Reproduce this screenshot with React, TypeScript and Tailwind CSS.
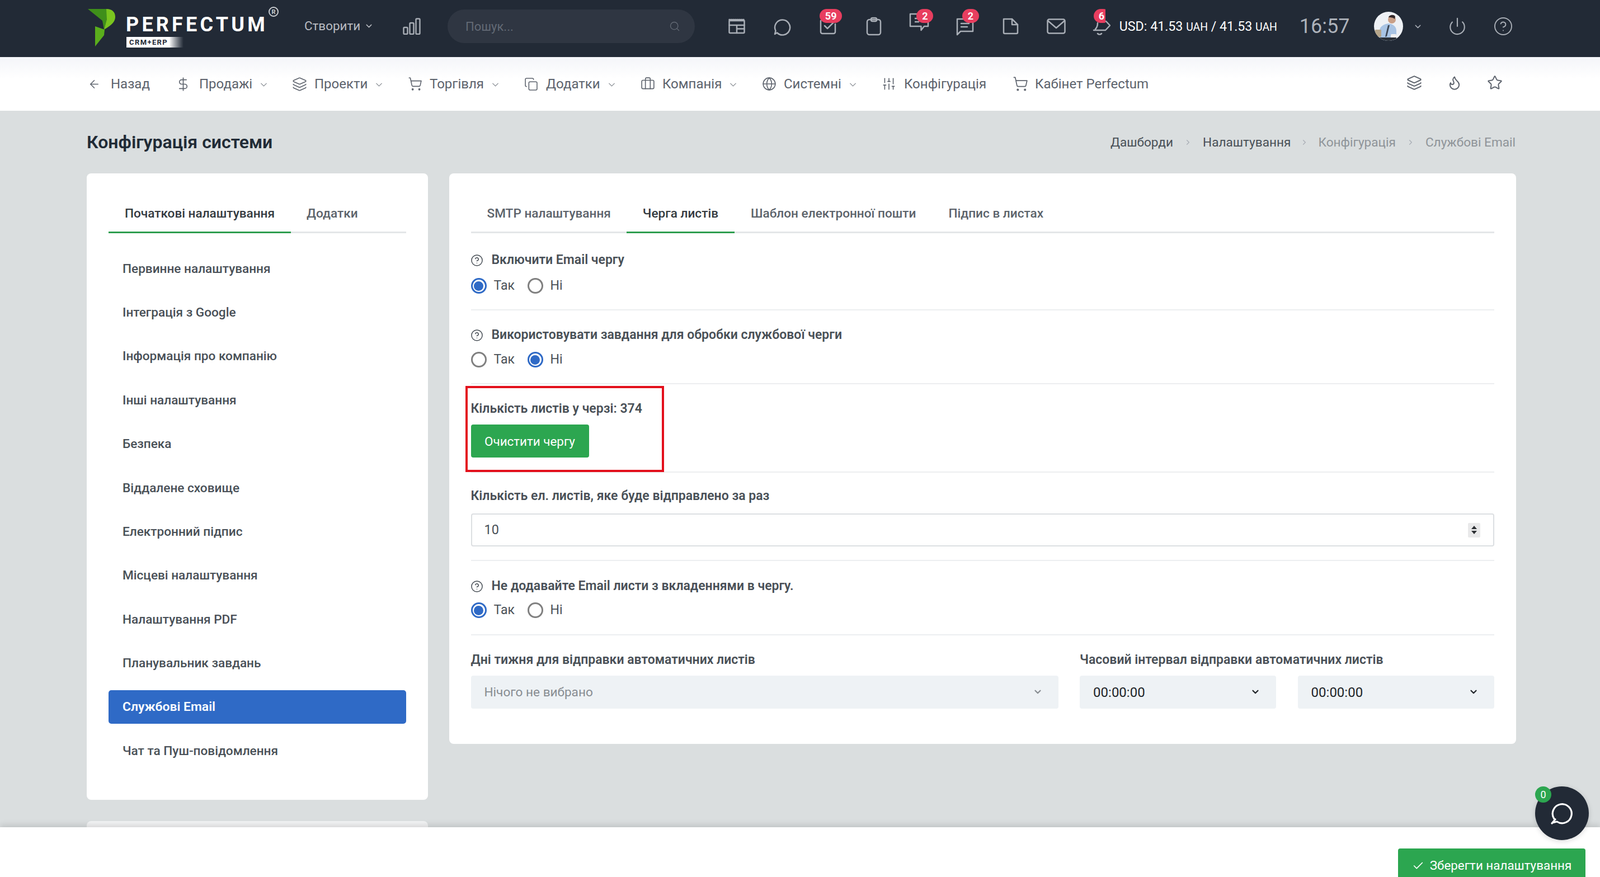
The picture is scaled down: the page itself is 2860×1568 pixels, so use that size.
import React from "react";
import { ArrowLeft, DollarSign, Layers, ShoppingCart, Copy, Briefcase, Globe, SlidersVertical, ChevronDown, ChevronRight, Flame, Star, Check, CircleHelp, Power, Search } from "lucide-react";

function Badge({ text, className }: { text: string; className: string }) {
  return (
    <span className={`absolute flex h-[25px] items-center justify-center rounded-full bg-[#e83e5f] text-[18px] font-bold text-white ${className}`}>{text}</span>
  );
}

function HeaderIcon({ children }: { children: React.ReactNode }) {
  return (
    <svg viewBox="0 0 36 36" width="36" height="36" fill="none" stroke="#a9aeb6" strokeWidth="2.5" strokeLinecap="round" strokeLinejoin="round">
      {children}
    </svg>
  );
}

function Radio({ checked, label }: { checked: boolean; label: string }) {
  return (
    <span className="flex items-center">
      {checked ? (
        <span className="flex h-[28px] w-[28px] items-center justify-center rounded-full border-[3px] border-[#2f6ac6]">
          <span className="h-[17px] w-[17px] rounded-full bg-[#2f6ac6]" />
        </span>
      ) : (
        <span className="h-[28px] w-[28px] rounded-full border-[3px] border-[#808080]" />
      )}
      <span className="ml-[13px] text-[23px] leading-[28px] text-[#495057]">{label}</span>
    </span>
  );
}

function RadioRow({ first, className }: { first: boolean; className: string }) {
  return (
    <div className={`flex ${className}`}>
      <div className="w-[101px]">
        <Radio checked={first} label="Так" />
      </div>
      <Radio checked={!first} label="Ні" />
    </div>
  );
}

function HelpLabel({ children }: { children: React.ReactNode }) {
  return (
    <div className="flex h-[30px] items-center">
      <CircleHelp size={23} strokeWidth={1.6} className="ml-[-1px] text-[#495057]" />
      <span className="ml-[15px] pt-[1px] text-[23px] font-semibold text-[#495057]">{children}</span>
    </div>
  );
}

function Label({ children }: { children: React.ReactNode }) {
  return <div className="flex h-[30px] items-center pt-[1px] text-[23px] font-semibold text-[#495057]">{children}</div>;
}

function Select({ text, muted, className }: { text: string; muted?: boolean; className: string }) {
  return (
    <div className={`flex h-[59px] items-center justify-between rounded-[4px] bg-[#eef2f5] pl-[24px] pr-[28px] ${className}`}>
      <span className={muted ? "text-[22.6px] text-[#888d92]" : "text-[24px] text-[#212529]"}>{text}</span>
      <ChevronDown size={18} strokeWidth={3} className={muted ? "mb-[2px] text-[#888d92]" : "mb-[2px] text-[#212529]"} />
    </div>
  );
}

const sideItems = [
  "Первинне налаштування",
  "Інтеграція з Google",
  "Інформація про компанію",
  "Інші налаштування",
  "Безпека",
  "Віддалене сховище",
  "Електронний підпис",
  "Місцеві налаштування",
  "Налаштування PDF",
  "Планувальник завдань",
  "Службові Email",
  "Чат та Пуш-повідомлення",
];

function NavItem({ icon, label, width, iconW, caret }: { icon: React.ReactNode; label: string; width: string; iconW: string; caret?: boolean }) {
  return (
    <div className={`flex items-center ${width}`}>
      <span className={`flex items-center ${iconW}`}>{icon}</span>
      <span className="text-[24px] text-[#5d636d]">{label}</span>
      {caret && <ChevronDown size={19} strokeWidth={1.4} className="ml-[11px] mt-[2px] text-[#7f848b]" />}
    </div>
  );
}

export default function App() {
  return (
    <div className="relative h-[1568px] w-[2860px] overflow-hidden bg-[#dadedf] font-[Roboto,sans-serif]">
      {/* top bar */}
      <header className="flex h-[102px] items-center bg-[#222a36] pb-[8px] pl-[155px]">
        <div className="relative h-[102px] w-[389px] shrink-0">
          <svg className="absolute left-[2px] top-[20px]" width="49" height="67" viewBox="0 0 49 67">
            <path d="M0 0H33L36 10L29 37L26 21Z" fill="#3f8f1a" />
            <path d="M33 0C45 0 49 7 49 14C49 22 44 28 29 37L34 18Z" fill="#7ac51f" />
            <path d="M13 31L30 37L29 47L13 67Z" fill="#5aae1c" />
          </svg>
          <span className="absolute left-[70px] top-[28px] font-['Inter',sans-serif] text-[36px] font-bold leading-[40px] tracking-[5.2px] text-white">PERFECTUM</span>
          <span className="absolute left-[71px] top-[70px] flex h-[19px] w-[102px] items-center bg-gradient-to-r from-white from-75% to-[#222a36] pl-[5px] font-['Inter',sans-serif] text-[13px] font-bold tracking-[1.4px] text-[#222a36]">CRM+ERP</span>
          <span className="absolute left-[325px] top-[16px] flex h-[18px] w-[18px] items-center justify-center rounded-full border-2 border-[#c9ccd0] text-[11px] font-bold leading-none text-[#c9ccd0]">R</span>
        </div>
        <div className="flex w-[176px] shrink-0 items-center text-[#b9bcc2]">
          <span className="text-[22.4px]">Створити</span>
          <ChevronDown size={17} strokeWidth={2} className="ml-[7px]" />
        </div>
        <div className="w-[80px] shrink-0">
          <svg width="32" height="30" viewBox="0 0 32 30" fill="none" stroke="#a9aeb6" strokeWidth="2.4">
            <rect x="1.5" y="17" width="7" height="12" rx="1.5" />
            <rect x="12.5" y="9" width="7" height="20" rx="1.5" />
            <rect x="23.5" y="1.5" width="7" height="27.5" rx="1.5" />
          </svg>
        </div>
        <div className="flex h-[60px] w-[442px] shrink-0 items-center justify-between rounded-[30px] bg-[#2f3642] pl-[32px] pr-[26px]">
          <span className="text-[22px] text-[#636a75]">Пошук...</span>
          <Search size={20} strokeWidth={1.6} className="text-[#636a75]" />
        </div>
        <div className="ml-[34px] flex shrink-0">
          <div className="flex h-[36px] w-[81.6px] justify-center">
            <HeaderIcon>
              <path d="M4.5 8h27v20.5a1.5 1.5 0 0 1-1.500 1.500H6a1.500 1.500 0 0 1-1.500-1.500Z" />
              <path d="M4.500 6h27" strokeDasharray="1.500 2" />
              <path d="M4.500 16h27M18 22.500h13.500M18 16v14" />
            </HeaderIcon>
          </div>
          <div className="flex h-[36px] w-[81.6px] justify-center">
            <HeaderIcon>
              <path d="M9 29.500 5 32l1.500-6A13.500 13.500 0 1 1 9 29.500Z" />
            </HeaderIcon>
          </div>
          <div className="relative flex h-[36px] w-[81.6px] justify-center">
            <HeaderIcon>
              <path d="M31 14v14a3 3 0 0 1-3 3H8a3 3 0 0 1-3-3V8" />
              <path d="M12 17l5 5 12-12" />
            </HeaderIcon>
            <Badge text="59" className="left-[26px] top-[-13px] w-[40px]" />
          </div>
          <div className="flex h-[36px] w-[81.6px] justify-center">
            <HeaderIcon>
              <rect x="6" y="6" width="24" height="27" rx="4" />
              <rect x="13" y="3" width="10" height="6" rx="2.500" />
            </HeaderIcon>
          </div>
          <div className="relative flex h-[36px] w-[81.6px] justify-center">
            <svg className="mt-[-7px]" viewBox="0 0 36 36" width="36" height="36" fill="none" stroke="#a9aeb6" strokeWidth="2.5" strokeLinejoin="round">
              <path d="M2 3h32v22H27l-5.500 7v-7H2Z" />
              <path d="M10 11h10M10 17h8" />
            </svg>
            <Badge text="2" className="left-[36px] top-[-13px] w-[30px]" />
          </div>
          <div className="relative flex h-[36px] w-[81.6px] justify-center">
            <HeaderIcon>
              <path d="M4 5h28v22H10l-6 6Z" />
              <path d="M11 13h14M11 19h11" />
            </HeaderIcon>
            <Badge text="2" className="left-[36px] top-[-13px] w-[30px]" />
          </div>
          <div className="flex h-[36px] w-[81.6px] justify-center">
            <HeaderIcon>
              <path d="M6 5h15l10 10v14a2 2 0 0 1-2 2H8a2 2 0 0 1-2-2Z" />
              <path d="M21 5v10h10" />
            </HeaderIcon>
          </div>
          <div className="flex h-[36px] w-[81.6px] justify-center">
            <HeaderIcon>
              <rect x="2.500" y="5.500" width="31" height="25" rx="3" />
              <path d="M3 8l15 13L33 8" />
            </HeaderIcon>
          </div>
          <div className="relative flex h-[36px] w-[56px] justify-end">
            <svg width="38" height="36" viewBox="0 0 38 36" fill="none" stroke="#a9aeb6" strokeWidth="2.500" strokeLinecap="round" strokeLinejoin="round">
              <path d="M11 23c2-2 4-5 4-11M8 25h21M15 31c2 2 5 2 7 0M30 9l7 7.500-7 7.500" />
            </svg>
            <span className="absolute left-[26px] top-[-13px] h-[25px] w-[21px] overflow-hidden">
              <span className="flex h-[25px] w-[30px] items-center rounded-full bg-[#e83e5f] pl-[9px] text-[18px] font-bold text-white">6</span>
            </span>
          </div>
        </div>
        <div className="ml-[16px] w-[322px] shrink-0 whitespace-nowrap text-[23.2px] text-white">
          USD: 41.53 <span className="text-[19.4px]">UAH</span> / 41.53 <span className="text-[19.4px]">UAH</span>
        </div>
        <div className="w-[133px] shrink-0 text-[36px] text-[#adb2ba]">16:57</div>
        <div className="flex w-[108px] shrink-0 items-center">
          <svg className="rounded-full" width="52" height="52" viewBox="0 0 52 52">
            <rect width="52" height="52" fill="#eef1f5" />
            <path d="M10 52V34c0-8 8-12 16-13 8 1 14 5 14 13v18Z" fill="#a9c4e4" />
            <path d="M25 24l3 0-5 20-3 1Z" fill="#3d4654" />
            <rect x="2" y="32" width="11" height="13" rx="1" fill="#b5a58a" />
            <rect x="30" y="40" width="10" height="9" rx="2" fill="#f3f3f3" />
            <path d="M10 46h30v6H10Z" fill="#2c3138" />
            <circle cx="32" cy="14" r="7" fill="#c9a088" />
            <path d="M26 10c1-5 11-6 12-1l-1 4c-3-3-7-3-11-3Z" fill="#33282a" />
          </svg>
          <ChevronDown size={17} strokeWidth={2} className="ml-[18px] text-[#a9aeb6]" />
        </div>
        <div className="flex w-[82px] shrink-0 justify-center">
          <Power size={34} strokeWidth={1.500} className="text-[#a9aeb6]" />
        </div>
        <div className="flex w-[82px] shrink-0 justify-center">
          <CircleHelp size={36} strokeWidth={1.300} className="text-[#a9aeb6]" />
        </div>
      </header>

      {/* secondary nav */}
      <nav className="flex h-[96px] items-center bg-gradient-to-b from-[#f4f5f9] from-0% to-white to-40% pl-[157px]">
        <NavItem width="w-[163px]" iconW="w-[41px]" label="Назад" icon={<ArrowLeft size={23} strokeWidth={1.700} className="text-[#5d636d]" />} />
        <NavItem width="w-[202px]" iconW="w-[36px]" label="Продажі" caret icon={<DollarSign size={27} strokeWidth={1.500} className="ml-[-6px] text-[#5d636d]" />} />
        <NavItem width="w-[207px]" iconW="w-[40px]" label="Проекти" caret icon={<Layers size={27} strokeWidth={1.500} className="text-[#5d636d]" />} />
        <NavItem width="w-[208px]" iconW="w-[39px]" label="Торгівля" caret icon={<ShoppingCart size={26} strokeWidth={1.500} className="text-[#5d636d]" />} />
        <NavItem width="w-[208px]" iconW="w-[39px]" label="Додатки" caret icon={<Copy size={25} strokeWidth={1.500} className="text-[#5d636d]" />} />
        <NavItem width="w-[217px]" iconW="w-[39px]" label="Компанія" caret icon={<Briefcase size={26} strokeWidth={1.500} className="text-[#5d636d]" />} />
        <NavItem width="w-[214px]" iconW="w-[39px]" label="Системні" caret icon={<Globe size={26} strokeWidth={1.500} className="text-[#5d636d]" />} />
        <NavItem width="w-[234px]" iconW="w-[40px]" label="Конфігурація" icon={<SlidersVertical size={26} strokeWidth={1.500} className="text-[#5d636d]" />} />
        <NavItem width="w-[682px]" iconW="w-[40px]" label="Кабінет Perfectum" icon={<ShoppingCart size={28} strokeWidth={1.500} className="text-[#5d636d]" />} />
        <div className="mb-[4px] flex w-[72px] justify-center"><Layers size={28} strokeWidth={1.700} className="text-[#5d636d]" /></div>
        <div className="mb-[4px] flex w-[72px] justify-center"><Flame size={28} strokeWidth={1.700} className="text-[#5d636d]" /></div>
        <div className="mb-[4px] flex w-[72px] justify-center"><Star size={28} strokeWidth={1.700} className="text-[#5d636d]" /></div>
      </nav>

      {/* page */}
      <main className="pl-[155px] pr-[151px]">
        <div className="flex h-[112px] items-center justify-between">
          <h1 className="text-[32px] font-semibold text-[#212b36]">Конфігурація системи</h1>
          <div className="flex items-center pt-[2px] text-[22.6px]">
            <span className="text-[#495057]">Дашборди</span>
            <ChevronRight size={15} className="mx-[19px] text-[#a9aeb6]" />
            <span className="text-[#495057]">Налаштування</span>
            <ChevronRight size={15} className="mx-[17px] text-[#a9aeb6]" />
            <span className="text-[#8f9499]">Конфігурація</span>
            <ChevronRight size={15} className="mx-[19px] text-[#a9aeb6]" />
            <span className="text-[#8f9499]">Службові Email</span>
          </div>
        </div>

        <div className="flex items-start gap-[37.500px]">
          {/* sidebar */}
          <aside className="w-[610px] shrink-0">
            <div className="h-[1120px] rounded-[8px] bg-white px-[39px] pt-[38px]">
              <div className="flex h-[69px] border-b-[3px] border-[#e4e6e8]">
                <div className="mb-[-3px] flex w-[326px] items-center justify-center border-b-[3px] border-[#2e9e4f] pt-[2px] text-[22.6px] font-medium text-[#343a40]">Початкові налаштування</div>
                <div className="ml-[28px] flex items-center pt-[2px] text-[22.6px] font-medium text-[#5c636b]">Додатки</div>
              </div>
              <div className="mt-[33px] flex flex-col gap-[18.400px]">
                {sideItems.map((t) => (
                  <div key={t} className={t === "Службові Email" ? "flex h-[60px] items-center rounded-[5px] bg-[#2f6ac6] px-[25px] pt-[1px] text-[22.9px] font-semibold text-white" : "flex h-[60px] items-center px-[25px] pt-[1px] text-[22.6px] font-medium text-[#495057]"}>
                    {t}
                  </div>
                ))}
              </div>
            </div>
            <div className="mt-[38px] h-[200px] rounded-[8px] bg-[#f2f3f4]" />
          </aside>

          {/* content */}
          <section className="h-[1020px] w-[1907px] shrink-0 rounded-[8px] bg-white px-[39px] pt-[38px]">
            <div className="flex h-[69px] border-b-[3px] border-[#e4e6e8]">
              <div className="flex items-center pl-[29px] pr-[28px] pt-[2px] text-[22.6px] font-medium text-[#5c636b]">SMTP налаштування</div>
              <div className="mb-[-3px] flex items-center border-b-[3px] border-[#2e9e4f] px-[29px] pt-[2px] text-[22.6px] font-medium text-[#343a40]">Черга листів</div>
              <div className="flex items-center px-[29px] pt-[2px] text-[22.6px] font-medium text-[#5c636b]">Шаблон електронної пошти</div>
              <div className="flex items-center px-[29px] pt-[2px] text-[22.6px] font-medium text-[#5c636b]">Підпис в листах</div>
            </div>

            <div className="border-b-2 border-[#eceef0] pb-[28px] pt-[33px]">
              <HelpLabel>Включити Email чергу</HelpLabel>
              <RadioRow first className="mt-[17px]" />
            </div>

            <div className="border-b-2 border-[#eceef0] pb-[28px] pt-[29px]">
              <HelpLabel>Використовувати завдання для обробки службової черги</HelpLabel>
              <RadioRow first={false} className="mt-[15px]" />
            </div>

            <div className="relative border-b-2 border-[#eceef0] pb-[25px] pt-[29px]">
              <div className="absolute left-[-10px] top-[3px] h-[154px] w-[355px] border-[4px] border-[#e3101c]" />
              <Label>Кількість листів у черзі: 374</Label>
              <div className="mt-[13px] flex h-[59px] w-[211px] items-center justify-center rounded-[4px] bg-[#2ca650] pt-[2px] text-[22.4px] text-white">Очистити чергу</div>
            </div>

            <div className="border-b-2 border-[#eceef0] pb-[24px] pt-[27px]">
              <Label>Кількість ел. листів, яке буде відправлено за раз</Label>
              <div className="mt-[16px] flex h-[59px] items-center justify-between rounded-[4px] border-2 border-[#dcdfe2] pl-[22px] pr-[23px] text-[23.4px] text-[#495057]">
                <span>10</span>
                <span className="flex h-[26px] w-[22px] flex-col items-center justify-center gap-[3px] rounded-[2px] bg-[#e9e9ea]">
                  <span className="h-0 w-0 border-x-[5px] border-b-[6px] border-x-transparent border-b-[#2c2f33]" />
                  <span className="h-0 w-0 border-x-[5px] border-t-[6px] border-x-transparent border-t-[#2c2f33]" />
                </span>
              </div>
            </div>

            <div className="border-b-2 border-[#eceef0] pb-[29px] pt-[30px]">
              <HelpLabel>Не додавайте Email листи з вкладеннями в чергу.</HelpLabel>
              <RadioRow first className="mt-[14px]" />
            </div>

            <div className="flex gap-[38.600px] pt-[29px]">
              <div className="w-[1050px]">
                <Label>Дні тижня для відправки автоматичних листів</Label>
                <Select text="Нічого не вибрано" muted className="mt-[13px]" />
              </div>
              <div className="flex-1">
                <Label>Часовий інтервал відправки автоматичних листів</Label>
                <div className="mt-[13px] flex gap-[38.600px]">
                  <Select text="00:00:00" className="flex-1" />
                  <Select text="00:00:00" className="flex-1" />
                </div>
              </div>
            </div>
          </section>
        </div>
      </main>

      {/* sticky footer */}
      <footer className="absolute bottom-0 left-0 flex h-[89px] w-full items-start justify-end bg-white pr-[26px] pt-[38px] shadow-[0_-4px_10px_rgba(0,0,0,0.12)]">
        <div className="flex h-[60px] w-[335px] items-center justify-center rounded-[4px] bg-[#2ca650] pt-[2px] text-[22.4px] text-white">
          <Check size={22} strokeWidth={1.800} className="mr-[10px]" />
          Зберегти налаштування
        </div>
      </footer>

      {/* chat bubble */}
      <div className="absolute left-[2744px] top-[1406px] flex h-[96px] w-[96px] items-center justify-center rounded-full bg-[#222a36] shadow-[0_2px_10px_rgba(0,0,0,0.15)]">
        <svg width="42" height="42" viewBox="0 0 42 42" fill="none" stroke="white" strokeWidth="3.200" strokeLinejoin="round">
          <path d="M9 32 3 39l1-1 8-2A17 17 0 1 0 7 31Z" />
        </svg>
        <span className="absolute left-0 top-0 flex h-[29px] w-[29px] items-center justify-center rounded-full bg-[#2ca650] text-[18px] text-white">0</span>
      </div>
    </div>
  );
}
